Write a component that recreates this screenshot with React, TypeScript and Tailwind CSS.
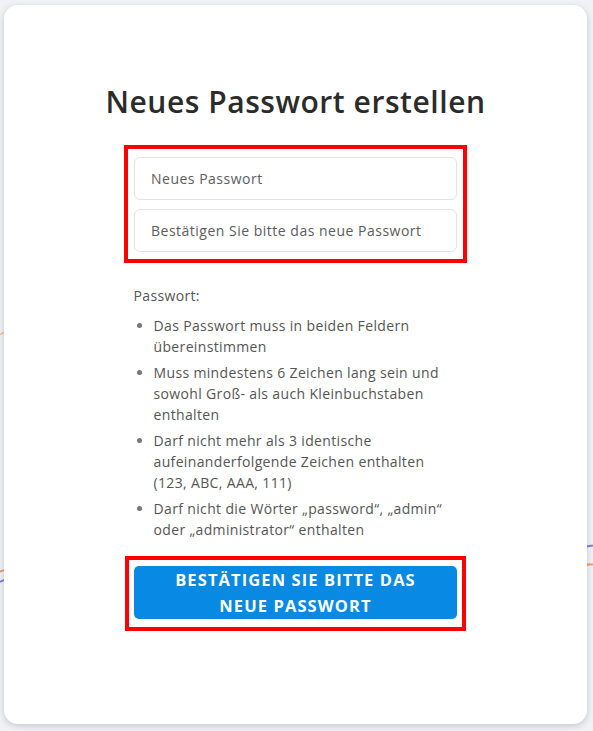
import React from 'react'

const rules = [
  ['Das Passwort muss in beiden Feldern', 'übereinstimmen'],
  ['Muss mindestens 6 Zeichen lang sein und', 'sowohl Groß- als auch Kleinbuchstaben', 'enthalten'],
  ['Darf nicht mehr als 3 identische', 'aufeinanderfolgende Zeichen enthalten', '(123, ABC, AAA, 111)'],
  ['Darf nicht die Wörter „password“, „admin“', 'oder „administrator“ enthalten'],
]

// dezente Linien hinter der Karte, sieht man nur am Rand
function BackgroundLines() {
  return (
    <svg className="absolute inset-0 h-full w-full" viewBox="0 0 593 731" preserveAspectRatio="none" fill="none">
      <path d="M-40 360 C 0 335, 20 320, 60 300" stroke="#f2b27a" strokeWidth="1.5" opacity="0.8" />
      <path d="M-40 585 C 0 570, 40 560, 90 548" stroke="#e8843c" strokeWidth="2" opacity="0.8" />
      <path d="M-40 600 C 0 580, 40 565, 90 550" stroke="#6a5acd" strokeWidth="2" opacity="0.8" />
      <path d="M520 560 C 560 550, 590 545, 640 540" stroke="#6a5acd" strokeWidth="2" opacity="0.8" />
      <path d="M520 568 C 560 566, 590 564, 640 562" stroke="#e8843c" strokeWidth="2" opacity="0.8" />
    </svg>
  )
}

export default function App() {
  return (
    <div
      className="relative min-h-[731px] bg-[#f1f2f5] pl-[4px] pr-[6px] pt-[5px]"
      style={{ fontFamily: '"Open Sans", "Liberation Sans", sans-serif' }}
    >
      <BackgroundLines />
      <div className="relative flex h-[719px] flex-col items-center rounded-[14px] bg-white pt-[79px] shadow-[0_2px_6px_rgba(60,72,100,0.25)]">
        <h1 className="text-[30px] font-semibold leading-[36px] tracking-[0.55px] text-[#2b2b2b]">
          Neues Passwort erstellen
        </h1>

        <div className="mt-[25px] flex w-[343px] flex-col gap-[9px] border-4 border-[#ff0000] px-[6px] pb-[7px] pt-[8px]">
          <input
            type="password"
            placeholder="Neues Passwort"
            className="h-[43px] w-full rounded-md border border-[#e3e3e3] px-4 text-[14px] tracking-[0.5px] text-[#555] outline-none placeholder:text-[#5c5c5c]"
          />
          <input
            type="password"
            placeholder="Bestätigen Sie bitte das neue Passwort"
            className="h-[43px] w-full rounded-md border border-[#e3e3e3] px-4 text-[14px] tracking-[0.5px] text-[#555] outline-none placeholder:text-[#5c5c5c]"
          />
        </div>

        <div className="mt-[22px] w-[324px] text-[14px] leading-[21px] tracking-[0.35px] text-[#555]">
          <p>Passwort:</p>
          <ul className="mt-[9px] flex list-disc flex-col gap-[5px] pl-5 marker:text-[#777]">
            {rules.map((lines, i) => (
              <li key={i}>
                {lines.map((l, j) => (
                  <span key={j} className="block whitespace-nowrap">
                    {l}
                  </span>
                ))}
              </li>
            ))}
          </ul>
        </div>

        <div className="mt-[16px] w-[341px] border-4 border-[#ff0000] px-[5px] pb-[8px] pt-[6px]">
          <button className="flex h-[53px] w-full flex-col items-center justify-center rounded-[5px] bg-[#0889e3] text-[16.5px] font-bold uppercase leading-[26px] tracking-[1.1px] text-white">
            <span>Bestätigen Sie bitte das</span>
            <span>neue Passwort</span>
          </button>
        </div>
      </div>
    </div>
  )
}
